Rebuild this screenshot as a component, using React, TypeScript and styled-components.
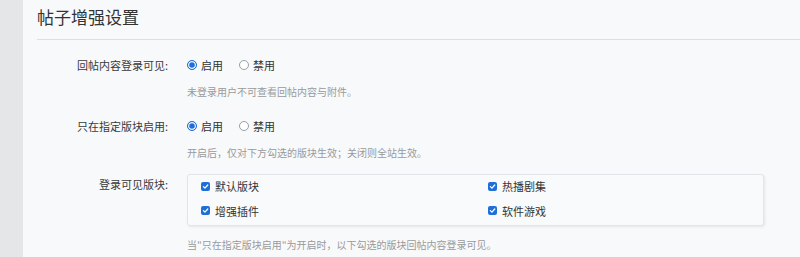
import React from "react";
import styled, { createGlobalStyle } from "styled-components";

const Global = createGlobalStyle`
  html, body { margin: 0; padding: 0; background: #f8f9fb; }
  body { font-family: "Noto Sans CJK SC", "Noto Sans", "Liberation Sans", sans-serif; }
  * { box-sizing: border-box; }
`;

const Page = styled.div`
  display: flex;
  width: 800px;
  height: 257px;
  overflow: hidden;
  background: #f8f9fb;
`;

const Sidebar = styled.div`
  width: 23px;
  flex: none;
  background: #e4e6e7;
`;

const Main = styled.div`
  flex: 1;
  padding-left: 14px;
`;

const Header = styled.div`
  height: 40px;
  display: flex;
  align-items: center;
  border-bottom: 1px solid #dcdfe3;
  padding-bottom: 6px;
`;

const Title = styled.h1`
  margin: 0;
  font-size: 17px;
  font-weight: 400;
  color: #333;
  line-height: 20px;
`;

const Form = styled.div`
  padding-top: 15px;
  display: flex;
  flex-direction: column;
`;

const Row = styled.div<{ $mt?: number }>`
  display: grid;
  grid-template-columns: 131px 1fr;
  column-gap: 19px;
  margin-top: ${(p) => p.$mt ?? 0}px;
  align-items: start;
`;

const Label = styled.div<{ $pt?: number }>`
  text-align: right;
  font-size: 11px;
  line-height: 20px;
  color: #3a3a3a;
  padding-top: ${(p) => p.$pt ?? 0}px;
`;

const Options = styled.div`
  display: flex;
  align-items: center;
  gap: 16px;
  height: 20px;
`;

const Option = styled.label`
  display: inline-flex;
  align-items: center;
  gap: 4px;
  font-size: 11px;
  color: #333;
  line-height: 20px;
`;

const Radio = styled.span<{ $on?: boolean }>`
  width: 10px;
  height: 10px;
  border-radius: 50%;
  border: 1px solid ${(p) => (p.$on ? "#1f6fd8" : "#9aa0a6")};
  background: ${(p) => (p.$on ? "#1f6fd8" : "#fff")};
  box-shadow: ${(p) => (p.$on ? "inset 0 0 0 1.2px #fff" : "none")};
  display: inline-block;
`;

const Hint = styled.div<{ $mt?: number }>`
  margin-left: 150px;
  margin-top: ${(p) => p.$mt ?? 0}px;
  font-size: 10px;
  line-height: 16px;
  color: #9a9a9a;
`;

const Box = styled.div`
  width: 577px;
  height: 52px;
  border: 1px solid #e2e5e9;
  border-radius: 3px;
  background: #f9fafb;
  box-shadow: 1px 1px 3px rgba(0, 0, 0, 0.08);
  padding: 2px 13px 5px;
  display: grid;
  grid-template-columns: 287px 287px;
  row-gap: 6px;
`;

const Check = styled.label`
  display: inline-flex;
  align-items: center;
  gap: 5px;
  font-size: 11px;
  color: #333;
  height: 18px;
`;

const CheckMark = styled.span`
  width: 9px;
  height: 9px;
  border-radius: 2px;
  background: #1f6fd8;
  display: inline-flex;
  align-items: center;
  justify-content: center;
`;

const Tick = () => (
  <CheckMark>
    <svg width="7" height="7" viewBox="0 0 10 10">
      <path d="M2 5.2 L4.2 7.3 L8.2 2.8" fill="none" stroke="#fff" strokeWidth="1.8" strokeLinecap="round" strokeLinejoin="round" />
    </svg>
  </CheckMark>
);

const RadioPair = () => (
  <Options>
    <Option><Radio $on />启用</Option>
    <Option><Radio />禁用</Option>
  </Options>
);

export default function App() {
  return (
    <Page>
      <Global />
      <Sidebar />
      <Main>
        <Header>
          <Title>帖子增强设置</Title>
        </Header>
        <Form>
          <Row>
            <Label>回帖内容登录可见:</Label>
            <RadioPair />
          </Row>
          <Hint $mt={9}>未登录用户不可查看回帖内容与附件。</Hint>
          <Row $mt={16}>
            <Label>只在指定版块启用:</Label>
            <RadioPair />
          </Row>
          <Hint $mt={9}>开启后，仅对下方勾选的版块生效；关闭则全站生效。</Hint>
          <Row $mt={13}>
            <Label $pt={0}>登录可见版块:</Label>
            <Box>
              <Check><Tick />默认版块</Check>
              <Check><Tick />热播剧集</Check>
              <Check><Tick />增强插件</Check>
              <Check><Tick />软件游戏</Check>
            </Box>
          </Row>
          <Hint $mt={11}>当"只在指定版块启用"为开启时，以下勾选的版块回帖内容登录可见。</Hint>
        </Form>
      </Main>
    </Page>
  );
}
